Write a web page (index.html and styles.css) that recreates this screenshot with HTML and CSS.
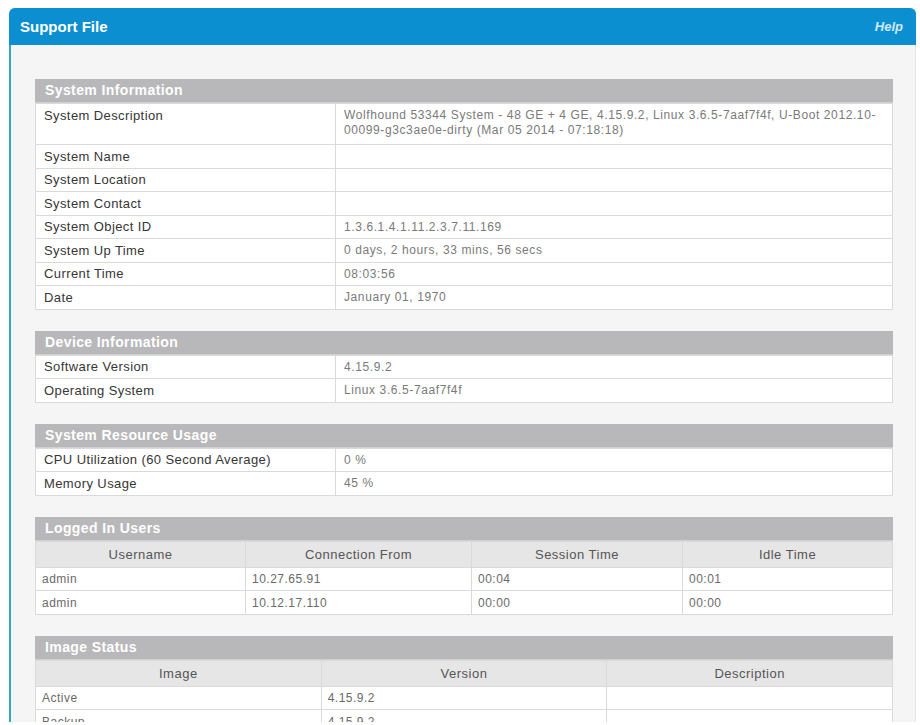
FILE: index.html
```html
<!DOCTYPE html>
<html lang="en">
<head>
  <meta charset="UTF-8" />
  <title>Support File</title>
  <link rel="stylesheet" href="styles.css">
</head>
<body>
  <div class="panel">
    <div class="panel-head">
      <span class="panel-title">Support File</span>
      <a class="help" href="#">Help</a>
    </div>
    <div class="panel-body">

      <div class="section">
        <div class="section-title">System Information</div>
        <table class="info">
          <tr class="tall"><td class="label">System Description</td><td class="value">Wolfhound 53344 System - 48 GE + 4 GE, 4.15.9.2, Linux 3.6.5-7aaf7f4f, U-Boot 2012.10-<br>00099-g3c3ae0e-dirty (Mar 05 2014 - 07:18:18)</td></tr>
          <tr><td class="label">System Name</td><td class="value"></td></tr>
          <tr><td class="label">System Location</td><td class="value"></td></tr>
          <tr><td class="label">System Contact</td><td class="value"></td></tr>
          <tr><td class="label">System Object ID</td><td class="value">1.3.6.1.4.1.11.2.3.7.11.169</td></tr>
          <tr><td class="label">System Up Time</td><td class="value">0 days, 2 hours, 33 mins, 56 secs</td></tr>
          <tr><td class="label">Current Time</td><td class="value">08:03:56</td></tr>
          <tr><td class="label">Date</td><td class="value">January 01, 1970</td></tr>
        </table>
      </div>

      <div class="section">
        <div class="section-title">Device Information</div>
        <table class="info">
          <tr><td class="label">Software Version</td><td class="value">4.15.9.2</td></tr>
          <tr><td class="label">Operating System</td><td class="value">Linux 3.6.5-7aaf7f4f</td></tr>
        </table>
      </div>

      <div class="section">
        <div class="section-title">System Resource Usage</div>
        <table class="info">
          <tr><td class="label">CPU Utilization (60 Second Average)</td><td class="value">0 %</td></tr>
          <tr><td class="label">Memory Usage</td><td class="value">45 %</td></tr>
        </table>
      </div>

      <div class="section">
        <div class="section-title">Logged In Users</div>
        <table class="grid users">
          <tr><th>Username</th><th>Connection From</th><th>Session Time</th><th>Idle Time</th></tr>
          <tr><td>admin</td><td>10.27.65.91</td><td>00:04</td><td>00:01</td></tr>
          <tr><td>admin</td><td>10.12.17.110</td><td>00:00</td><td>00:00</td></tr>
        </table>
      </div>

      <div class="section">
        <div class="section-title">Image Status</div>
        <table class="grid">
          <tr><th>Image</th><th>Version</th><th>Description</th></tr>
          <tr><td>Active</td><td>4.15.9.2</td><td></td></tr>
          <tr><td>Backup</td><td>4.15.9.2</td><td></td></tr>
        </table>
      </div>

    </div>
  </div>
</body>
</html>
```

FILE: styles.css
```css
body {
  margin: 0;
  background: #fff;
  font-family: "Liberation Sans", Arial, sans-serif;
  font-size: 13px;
}
.panel {
  width: 907px;
  height: 714px;
  margin: 8px 0 0 9px;
  display: flex;
  flex-direction: column;
  overflow: hidden;
}
.panel-head {
  height: 37px;
  flex: none;
  display: flex;
  align-items: center;
  justify-content: space-between;
  padding: 0 13px 0 11px;
  background: #0b8fd1;
  border-radius: 6px 6px 0 0;
  box-shadow: 0 0 2px #9fdcef;
}
.panel-title {
  color: #fff;
  font-weight: bold;
  font-size: 15px;
}
.help {
  color: #cfe9f9;
  font-weight: bold;
  font-style: italic;
  font-size: 13px;
  text-decoration: none;
}
.panel-body {
  flex: 1;
  background: #f5f5f5;
  border-left: 2px solid #38a9b8;
  border-right: 1px solid #e4e4e4;
  padding: 34px 22px 0 24px;
}
.section { margin-bottom: 21px; }
.section-title {
  height: 23px;
  line-height: 23px;
  padding-left: 10px;
  background: #b8b8ba;
  color: #fff;
  font-weight: bold;
  font-size: 14px;
  letter-spacing: 0.4px;
  border-bottom: 1px solid #d0d0d0;
}
table {
  width: 100%;
  border-collapse: collapse;
  background: #fff;
  table-layout: fixed;
}
td, th {
  border: 1px solid #dadada;
  padding: 3.5px 8px 3px;
  line-height: 16px;
  text-align: left;
  vertical-align: top;
}
.info .label {
  width: 283px;
  color: #363636;
  letter-spacing: 0.4px;
}
.info .value {
  color: #7a7a7a;
  font-size: 12px;
  letter-spacing: 0.6px;
  line-height: 15px;
  padding-top: 4px;
}
.info .tall td { padding-bottom: 6px; }
.grid th {
  background: #e6e6e6;
  color: #555;
  font-weight: normal;
  text-align: center;
  letter-spacing: 0.5px;
  padding: 5px 8px 4px;
}
.grid td {
  color: #6a6a6a;
  font-size: 12px;
  letter-spacing: 0.5px;
  padding-left: 6px;
}
.users th:nth-child(1) { width: 193px; }
.users th:nth-child(2) { width: 209px; }
.users th:nth-child(3) { width: 194px; }
```
